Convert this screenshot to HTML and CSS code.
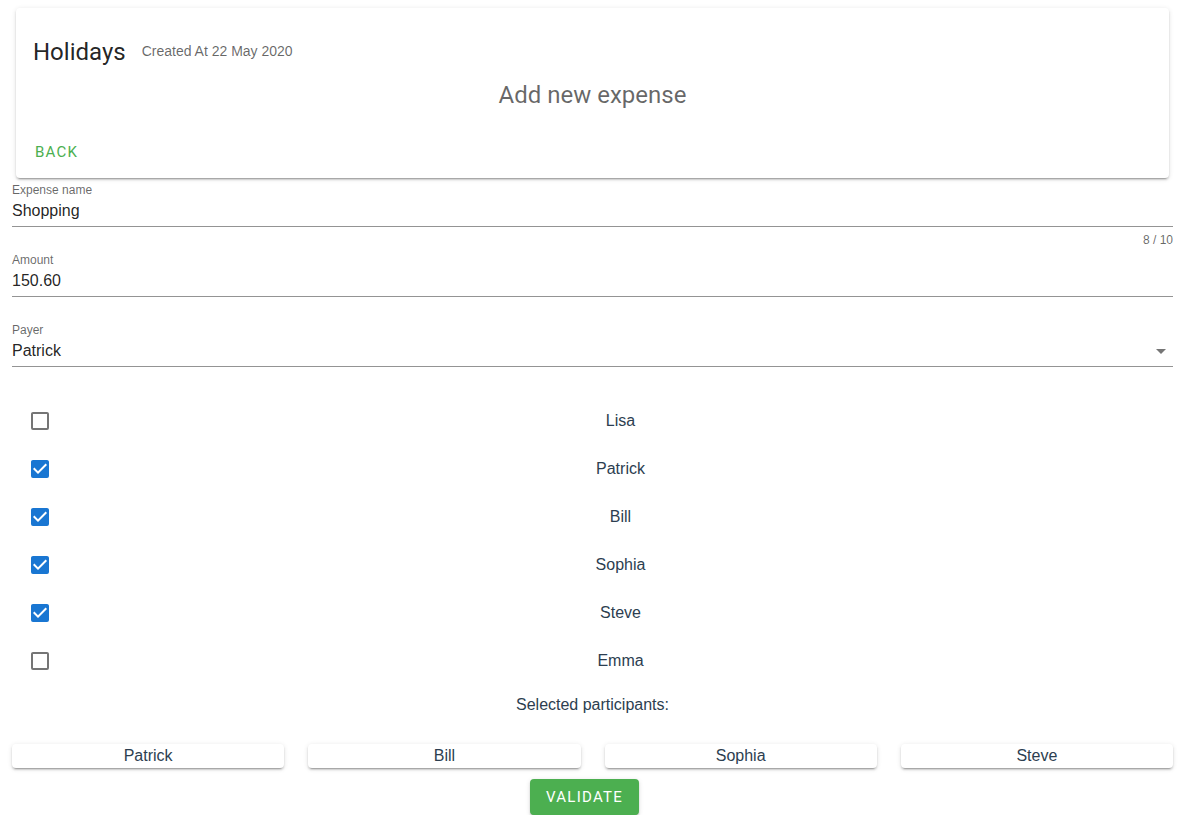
FILE: index.html
```html
<!DOCTYPE html>
<html lang="en">
<head>
<meta charset="utf-8">
<title>Add new expense</title>
<link rel="stylesheet" href="styles.css">
</head>
<body>
<div class="app">
  <div class="card">
    <div class="card-title">
      <span class="headline">Holidays</span>
      <span class="created">Created At 22 May 2020</span>
    </div>
    <div class="card-subtitle">Add new expense</div>
    <div class="card-actions">
      <button class="btn-text">Back</button>
    </div>
  </div>

  <div class="field">
    <div class="field-label">Expense name</div>
    <div class="field-input">Shopping</div>
    <div class="field-details"><span class="counter">8 / 10</span></div>
  </div>
  <div class="field">
    <div class="field-label">Amount</div>
    <div class="field-input">150.60</div>
    <div class="field-details"></div>
  </div>
  <div class="field">
    <div class="field-label">Payer</div>
    <div class="field-input select">
      <span>Patrick</span>
      <span class="caret"></span>
    </div>
    <div class="field-details"></div>
  </div>

  <div class="checklist">
    <div class="check-row"><span class="check-cell"><svg class="box off" viewBox="3 3 18 18" width="18" height="18"><path d="M19,3H5C3.89,3 3,3.89 3,5V19A2,2 0 0,0 5,21H19A2,2 0 0,0 21,19V5C21,3.89 20.1,3 19,3M19,5V19H5V5H19Z"/></svg></span><span class="check-name">Lisa</span></div>
    <div class="check-row"><span class="check-cell"><svg class="box on" viewBox="3 3 18 18" width="18" height="18"><path d="M10,17L5,12L6.41,10.58L10,14.17L17.59,6.58L19,8M19,3H5C3.89,3 3,3.89 3,5V19A2,2 0 0,0 5,21H19A2,2 0 0,0 21,19V5C21,3.89 20.1,3 19,3Z"/></svg></span><span class="check-name">Patrick</span></div>
    <div class="check-row"><span class="check-cell"><svg class="box on" viewBox="3 3 18 18" width="18" height="18"><path d="M10,17L5,12L6.41,10.58L10,14.17L17.59,6.58L19,8M19,3H5C3.89,3 3,3.89 3,5V19A2,2 0 0,0 5,21H19A2,2 0 0,0 21,19V5C21,3.89 20.1,3 19,3Z"/></svg></span><span class="check-name">Bill</span></div>
    <div class="check-row"><span class="check-cell"><svg class="box on" viewBox="3 3 18 18" width="18" height="18"><path d="M10,17L5,12L6.41,10.58L10,14.17L17.59,6.58L19,8M19,3H5C3.89,3 3,3.89 3,5V19A2,2 0 0,0 5,21H19A2,2 0 0,0 21,19V5C21,3.89 20.1,3 19,3Z"/></svg></span><span class="check-name">Sophia</span></div>
    <div class="check-row"><span class="check-cell"><svg class="box on" viewBox="3 3 18 18" width="18" height="18"><path d="M10,17L5,12L6.41,10.58L10,14.17L17.59,6.58L19,8M19,3H5C3.89,3 3,3.89 3,5V19A2,2 0 0,0 5,21H19A2,2 0 0,0 21,19V5C21,3.89 20.1,3 19,3Z"/></svg></span><span class="check-name">Steve</span></div>
    <div class="check-row"><span class="check-cell"><svg class="box off" viewBox="3 3 18 18" width="18" height="18"><path d="M19,3H5C3.89,3 3,3.89 3,5V19A2,2 0 0,0 5,21H19A2,2 0 0,0 21,19V5C21,3.89 20.1,3 19,3M19,5V19H5V5H19Z"/></svg></span><span class="check-name">Emma</span></div>
  </div>

  <div class="selected-title">Selected participants:</div>
  <div class="chips">
    <div class="chip">Patrick</div>
    <div class="chip">Bill</div>
    <div class="chip">Sophia</div>
    <div class="chip">Steve</div>
  </div>
  <div class="actions">
    <button class="btn-validate">Validate</button>
  </div>
</div>
</body>
</html>
```

FILE: styles.css
```css
* { box-sizing: border-box; }
html, body { margin: 0; padding: 0; background: #fff; }
body {
  font-family: "Liberation Sans", Arial, sans-serif;
  color: #2c3e50;
}
.app {
  width: 1196px;
  padding: 8px 23px 0 12px;
}
.card {
  margin: 0 4px;
  height: 170px;
  background: #fff;
  border-radius: 4px;
  box-shadow: 0 3px 1px -2px rgba(0,0,0,.2), 0 2px 2px 0 rgba(0,0,0,.14), 0 1px 5px 0 rgba(0,0,0,.12);
  padding: 27px 16px 8px 16px;
  display: flex;
  flex-direction: column;
}
.card-title {
  display: flex;
  align-items: center;
  height: 32px;
  line-height: 32px;
  padding-left: 1px;
}
.headline {
  font-family: Roboto, sans-serif;
  font-size: 24px;
  color: rgba(0,0,0,.87);
  position: relative;
  top: 1px;
}
.created {
  font-family: "Liberation Sans", Arial, sans-serif;
  font-size: 14px;
  color: rgba(0,0,0,.6);
  margin-left: 16px;
}
.card-subtitle {
  margin-top: 12px;
  height: 32px;
  line-height: 32px;
  text-align: center;
  font-family: Roboto, sans-serif;
  font-size: 24px;
  color: rgba(0,0,0,.6);
}
.card-actions {
  margin-top: 23px;
  display: flex;
}
.btn-text {
  background: none;
  border: 0;
  height: 36px;
  padding: 0 0 0 3px;
  font-family: Roboto, sans-serif;
  font-size: 15px;
  font-weight: 400;
  letter-spacing: 1.25px;
  text-transform: uppercase;
  color: #4caf50;
  cursor: pointer;
}
.field {
  padding-top: 5px;
}
.field-label {
  font-size: 12px;
  line-height: 14px;
  height: 14px;
  color: rgba(0,0,0,.6);
}
.field-input {
  margin-top: 4px;
  font-size: 16px;
  line-height: 20px;
  padding-bottom: 5px;
  border-bottom: 1px solid rgba(0,0,0,.42);
  color: rgba(0,0,0,.87);
}
.field-input.select {
  display: flex;
  justify-content: space-between;
  align-items: center;
}
.caret {
  width: 0;
  height: 0;
  border-left: 5px solid transparent;
  border-right: 5px solid transparent;
  border-top: 5px solid rgba(0,0,0,.54);
  margin-right: 7px;
}
.field-details {
  height: 21px;
  padding-top: 6px;
  text-align: right;
  font-size: 12px;
  line-height: 14px;
  color: rgba(0,0,0,.6);
}
.checklist {
  margin-top: 9px;
}
.check-row {
  display: flex;
  align-items: center;
  height: 48px;
}
.check-cell {
  width: 56px;
  padding-left: 19px;
  display: flex;
}
.box {
  display: block;
  width: 18px;
  height: 18px;
}
.box.off { fill: rgba(0,0,0,.54); }
.box.on { fill: #1976d2; }
.check-name {
  flex: 1;
  text-align: center;
  font-size: 16px;
}
.selected-title {
  margin-top: 11px;
  text-align: center;
  font-size: 16px;
  line-height: 18px;
}
.chips {
  margin-top: 30px;
  display: grid;
  grid-template-columns: repeat(4, 1fr);
  gap: 24px;
}
.chip {
  height: 24px;
  line-height: 24px;
  text-align: center;
  font-size: 16px;
  background: #fff;
  border-radius: 4px;
  box-shadow: 0 3px 1px -2px rgba(0,0,0,.2), 0 2px 2px 0 rgba(0,0,0,.14), 0 1px 5px 0 rgba(0,0,0,.12);
}
.actions {
  margin-top: 11px;
  display: flex;
  justify-content: center;
  padding-right: 16px;
}
.btn-validate {
  height: 36px;
  padding: 0 16px;
  min-width: 64px;
  border: 0;
  border-radius: 4px;
  background: #4caf50;
  color: #fff;
  font-family: Roboto, sans-serif;
  font-size: 15px;
  font-weight: 400;
  letter-spacing: 1.25px;
  text-transform: uppercase;
  box-shadow: 0 3px 1px -2px rgba(0,0,0,.2), 0 2px 2px 0 rgba(0,0,0,.14), 0 1px 5px 0 rgba(0,0,0,.12);
  cursor: pointer;
}
```
